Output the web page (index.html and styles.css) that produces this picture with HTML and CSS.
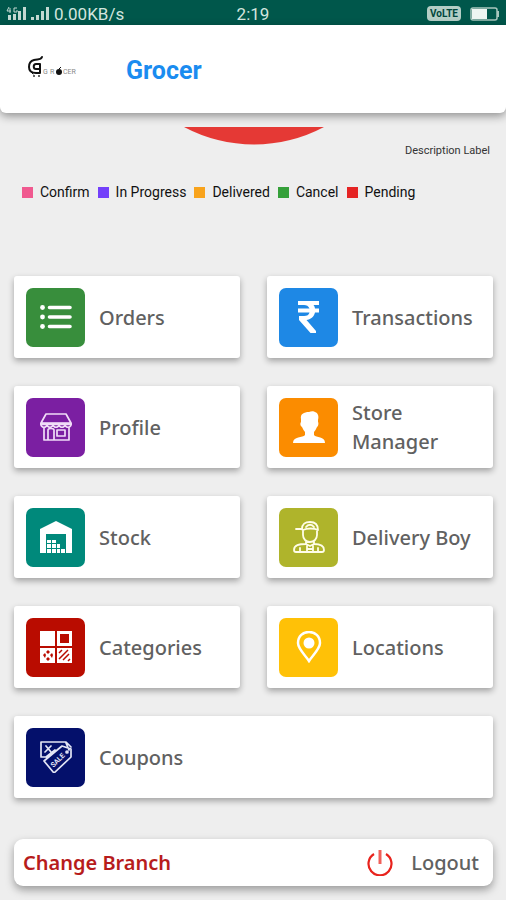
FILE: index.html
```html
<!DOCTYPE html>
<html lang="en">
<head>
<meta charset="utf-8">
<meta name="viewport" content="width=device-width, initial-scale=1">
<title>Grocer</title>
<link rel="stylesheet" href="styles.css">
</head>
<body>
<div class="status">
  <div class="status-left">
    <svg class="signal" viewBox="0 0 44 16" width="44" height="16" aria-hidden="true">
      <g fill="#c3d8d1">
        <rect x="2" y="9" width="3" height="5"/><rect x="7" y="8" width="3" height="6"/><rect x="12" y="5" width="3" height="9"/><rect x="17" y="1" width="3" height="13"/>
        <rect x="25" y="11" width="3" height="3"/><rect x="30" y="9" width="3" height="5"/><rect x="35" y="5" width="3" height="9"/><rect x="40" y="1" width="3" height="13"/>
      </g>
      <path d="M3 1L1 5H5M4 2V7M11 2H8V6H11V4" fill="none" stroke="#c3d8d1"/>
    </svg>
    <span>0.00KB/s</span>
  </div>
  <span>2:19</span>
  <div class="status-right">
    <span class="volte">VoLTE</span>
    <svg viewBox="0 0 30 14" width="30" height="14" aria-hidden="true">
      <rect x="1" y="1" width="26" height="12" rx="2" fill="none" stroke="#a9c8bf" stroke-width="1.5"/>
      <rect x="2" y="2" width="15" height="10" fill="#eef5f2"/><rect x="27" y="4" width="2" height="6" fill="#a9c8bf"/>
    </svg>
  </div>
</div>

<header class="header">
  <svg class="logo" viewBox="0 0 52 24" width="52" height="24" role="img" aria-label="Grocer logo">
    <g fill="none" stroke="#111" stroke-linecap="round" stroke-linejoin="round">
      <path d="M15 2C14 5 11 4 7 5C3 6 2 9 2 12C2 16 4 18 9 18H13V9H9C6 9 6 14 9 14H12" stroke-width="2"/>
      <path d="M4 17L6 19" stroke-width="1"/>
    </g>
    <circle cx="7" cy="21" r="1" fill="#333"/><circle cx="12" cy="21" r="1" fill="#333"/>
    <text class="logo-text" x="16" y="19">G</text>
    <text class="logo-text" x="23" y="19">R</text>
    <circle cx="32" cy="17" r="3" fill="#111"/><path d="M32 14L34 12" stroke="#111"/>
    <text class="logo-text" x="36" y="19">CER</text>
  </svg>
  <h1>Grocer</h1>
</header>

<main>
  <section class="chart" aria-label="Order status">
    <svg class="pie" viewBox="0 0 140 18" width="140" height="18" aria-hidden="true"><path d="M0 0H140A149 149 0 0 1 0 0Z" fill="#e53935"/></svg>
    <p class="description">Description Label</p>
    <ul class="legend">
      <li><i class="swatch pink"></i>Confirm</li>
      <li><i class="swatch violet"></i>In Progress</li>
      <li><i class="swatch amber"></i>Delivered</li>
      <li><i class="swatch green"></i>Cancel</li>
      <li><i class="swatch red"></i>Pending</li>
    </ul>
  </section>

  <nav class="menu" aria-label="Main menu">
    <a class="card" href="#orders"><span class="tile orders"><svg viewBox="0 0 32 32" aria-hidden="true">
      <g stroke="#fff" stroke-width="3.6" stroke-linecap="round"><path d="M9.5 6.5H30M9.5 16H30M9.5 25.5H30"/></g>
      <circle cx="2.5" cy="6.5" r="2.4" fill="#fff"/><circle cx="2.5" cy="16" r="2.4" fill="#fff"/><circle cx="2.5" cy="25.5" r="2.4" fill="#fff"/></svg></span><span>Orders</span></a>

    <a class="card" href="#transactions"><span class="tile transactions"><svg viewBox="0 0 32 32" aria-hidden="true">
      <path d="M5 0H26V4H20.5C21.3 5 21.8 6 22 7.500H26V11.500H22C21 16 17.500 18.500 13.500 19L23 30V32H17.500L6 19V15H11C14 15 16 14 16.500 11.500H5V7.500H16.500C15.500 5 13.500 4 11 4H5Z" fill="#fff"/></svg></span><span>Transactions</span></a>

    <a class="card" href="#profile"><span class="tile profile"><svg viewBox="0 0 32 32" aria-hidden="true">
      <g fill="none" stroke="#f0dcf7" stroke-width="1.7" stroke-linejoin="round" stroke-linecap="round">
        <path d="M6 3H26L31 12H1ZM1 12V14C2 17 6 17 7 14C8 17 12 17 13 14C14 17 18 17 19 14C20 17 24 17 25 14C26 17 30 17 31 14V12M4 17V29H29V17M8 29V19C8 17 14 17 14 19V29M17 19H25V25H17Z"/>
        <path d="M1 13H31" stroke-width="2.4"/>
      </g></svg></span><span>Profile</span></a>

    <a class="card" href="#store-manager"><span class="tile manager"><svg viewBox="0 0 32 32" aria-hidden="true">
      <path d="M8 8C7 3 11 1 16 1C18 0 21 0 22 1C25 2 26 5 25 9V11C26 12 25 16 24 16C23 18 22 20 21 21V24C23 27 32 25 32 32H0C0 25 10 27 12 24V21C11 20 10 18 9 16C7 15 7 12 8 11Z" fill="#fff"/></svg></span><span>Store Manager</span></a>

    <a class="card" href="#stock"><span class="tile stock"><svg viewBox="0 0 32 32" aria-hidden="true">
      <path d="M0 8L16 0L32 8V32H26V13H6V32H0Z" fill="#fff"/>
      <path d="M7 19h4v3H7zM12 19h4v3h-4zM7 23h4v4H7zM12 23h4v4h-4zM17 23h3v4h-3zM7 28h4v4H7zM12 28h4v4h-4zM17 28h3v4h-3zM21 28h4v4h-4z" fill="#fff"/></svg></span><span>Stock</span></a>

    <a class="card" href="#delivery-boy"><span class="tile delivery"><svg viewBox="0 0 32 32" aria-hidden="true">
      <g fill="none" stroke="#fffde8" stroke-width="1.8" stroke-linecap="round" stroke-linejoin="round">
        <path d="M3 8H9C9 3 12 1 17 1C22 1 25 4 25 9C21 7 14 7 10 9L8 8M13 6C15 3 19 3 21 6M10 10V14C10 18 13 21 17 21C21 21 24 18 24 14V10M13 20V23L17 25L21 23V20M13 23C6 23 1 24 1 29C1 31 2 31 3 31H29C31 31 31 30 31 29C31 24 27 23 21 23M7 31V27M25 31V27M14 25V31M20 25V31M14 28H20"/>
      </g></svg></span><span>Delivery Boy</span></a>

    <a class="card" href="#categories"><span class="tile categories"><svg viewBox="0 0 32 32" aria-hidden="true">
      <path d="M0 0H15V15H0ZM17 0H32V15H17ZM0 17H15V32H0ZM17 17H32V32H17Z" fill="#fff"/>
      <path d="M20 3H29V12H20ZM6 21L8 19L10 21L8 23ZM3 24L5 22L6 24L5 27ZM10 24L12 22L13 24L12 27ZM6 28L8 26L10 28L8 30Z" fill="#b90c00"/>
      <path d="M19 28L28 19M23 29L29 23M19 22L22 19M28 30L30 28" stroke="#b90c00" stroke-width="1.5"/></svg></span><span>Categories</span></a>

    <a class="card" href="#locations"><span class="tile locations"><svg viewBox="0 0 32 32" aria-hidden="true">
      <path d="M16 30C13 25 5 18 5 12C5 5 10 1 16 1C22 1 27 5 27 12C27 18 19 25 16 30Z" fill="none" stroke="#fff" stroke-width="2.5"/><circle cx="16" cy="12" r="5.5" fill="#fff"/></svg></span><span>Locations</span></a>

    <a class="card wide" href="#coupons"><span class="tile coupons"><svg viewBox="0 0 32 32" aria-hidden="true">
      <g fill="none" stroke="#e3e5f5" stroke-width="1.7" stroke-linejoin="round" stroke-linecap="round">
        <path d="M6 16H1V1H26L31 6M4 20L22 5L31 8V16L14 32ZM6 16L15 9M6 5L11 11M11 5L5 11M26 2L29 9"/>
        <circle cx="27" cy="11" r="1"/>
      </g>
      <text class="sale" x="-8" y="3" transform="translate(17 19) rotate(-45)">SALE</text></svg></span><span>Coupons</span></a>
  </nav>

  <div class="footer">
    <button class="branch" type="button">Change Branch</button>
    <button class="logout" type="button"><svg viewBox="0 0 26 26" width="26" height="26" aria-hidden="true">
      <path d="M7 4A11.500 11.500 0 1 0 19 4" fill="none" stroke="#e8231d" stroke-width="2.2"/><path d="M13 0V14" stroke="#f0605a" stroke-width="3"/></svg><span>Logout</span></button>
  </div>
</main>
</body>
</html>
```

FILE: styles.css
```css
* {
  box-sizing: border-box;
}

body {
  margin: 0;
  min-height: 100vh;
  background: #eee;
  color: #616161;
  font-family: Roboto, sans-serif;
}

.status {
  display: grid;
  grid-template-columns: 1fr auto 1fr;
  align-items: center;
  height: 25px;
  padding: 2px 6px 0;
  background: #00574b;
  color: #d3e5df;
  font-size: 17px;
}

.status-left,
.status-right {
  display: flex;
  align-items: center;
  gap: 4px;
}

.status-right {
  justify-content: flex-end;
  gap: 9px;
}

.volte {
  padding: 0 3px;
  border-radius: 4px;
  background: #b4cec6;
  color: #00463c;
  font-size: 10px;
  font-weight: 700;
  line-height: 15px;
}

.header {
  position: relative;
  display: flex;
  align-items: center;
  gap: 47px;
  height: 88px;
  padding: 0 27px;
  border-radius: 0 0 6px 6px;
  background: #fff;
  box-shadow: 0 3px 10px rgba(0, 0, 0, 0.4);
}

.logo {
  margin-bottom: 4px;
}

.logo-text {
  fill: #888;
  font-size: 7px;
}

h1 {
  margin: 0;
  padding-top: 3px;
  color: #1a8cf0;
  font-size: 25px;
  font-weight: 700;
}

main {
  padding: 14px 13px 14px 14px;
}

.chart {
  display: flex;
  flex-direction: column;
  height: 149px;
}

.pie {
  align-self: center;
}

.description {
  margin: 0 3px 0 0;
  color: #333;
  font-size: 11px;
  line-height: 12px;
  text-align: right;
}

.legend {
  display: flex;
  gap: 8px;
  margin: 26px 0 0;
  padding: 0 0 0 8px;
  color: #111;
  font-size: 14px;
  line-height: 18px;
  list-style: none;
}

.legend li {
  display: flex;
  align-items: center;
  gap: 7px;
  white-space: nowrap;
}

.swatch {
  width: 11px;
  height: 11px;
}

.pink { background: #f0598f; }
.violet { background: #7340fa; }
.amber { background: #f8a31c; }
.green { background: #35a03a; }
.red { background: #e52424; }

.menu {
  display: grid;
  grid-template-columns: 1fr 1fr;
  gap: 28px 27px;
}

.card {
  display: flex;
  align-items: center;
  gap: 14px;
  min-height: 82px;
  padding: 0 12px;
  border-radius: 3px;
  background: #fff;
  box-shadow: 0 3px 6px rgba(0, 0, 0, 0.32);
  color: #616161;
  font: 500 20px/29px "Noto Sans", sans-serif;
  text-decoration: none;
}

.wide {
  grid-column: 1 / -1;
}

.tile {
  display: grid;
  flex: none;
  place-items: center;
  width: 59px;
  height: 59px;
  border-radius: 7px;
}

.tile svg {
  width: 32px;
  height: 32px;
}

.orders { background: #388e3c; }
.transactions { background: #1e88e5; }
.profile { background: #7b1fa2; }
.manager { background: #fb8c00; }
.stock { background: #00897b; }
.delivery { background: #afb42b; }
.categories { background: #b90c00; }
.locations { background: #ffc107; }
.coupons { background: #04106b; }

.sale {
  fill: #e3e5f5;
  font: 700 7px Roboto, sans-serif;
}

.footer {
  display: flex;
  align-items: center;
  justify-content: space-between;
  min-height: 47px;
  margin-top: 41px;
  padding: 0 14px 0 9px;
  border-radius: 9px;
  background: #fff;
  box-shadow: 0 4px 8px rgba(0, 0, 0, 0.35);
}

button {
  padding: 0;
  border: 0;
  background: none;
  cursor: pointer;
  font: 500 20px/29px "Noto Sans", sans-serif;
}

.branch {
  color: #b71c1c;
  font-weight: 600;
}

.logout {
  display: flex;
  align-items: center;
  gap: 18px;
  color: #616161;
}
```
